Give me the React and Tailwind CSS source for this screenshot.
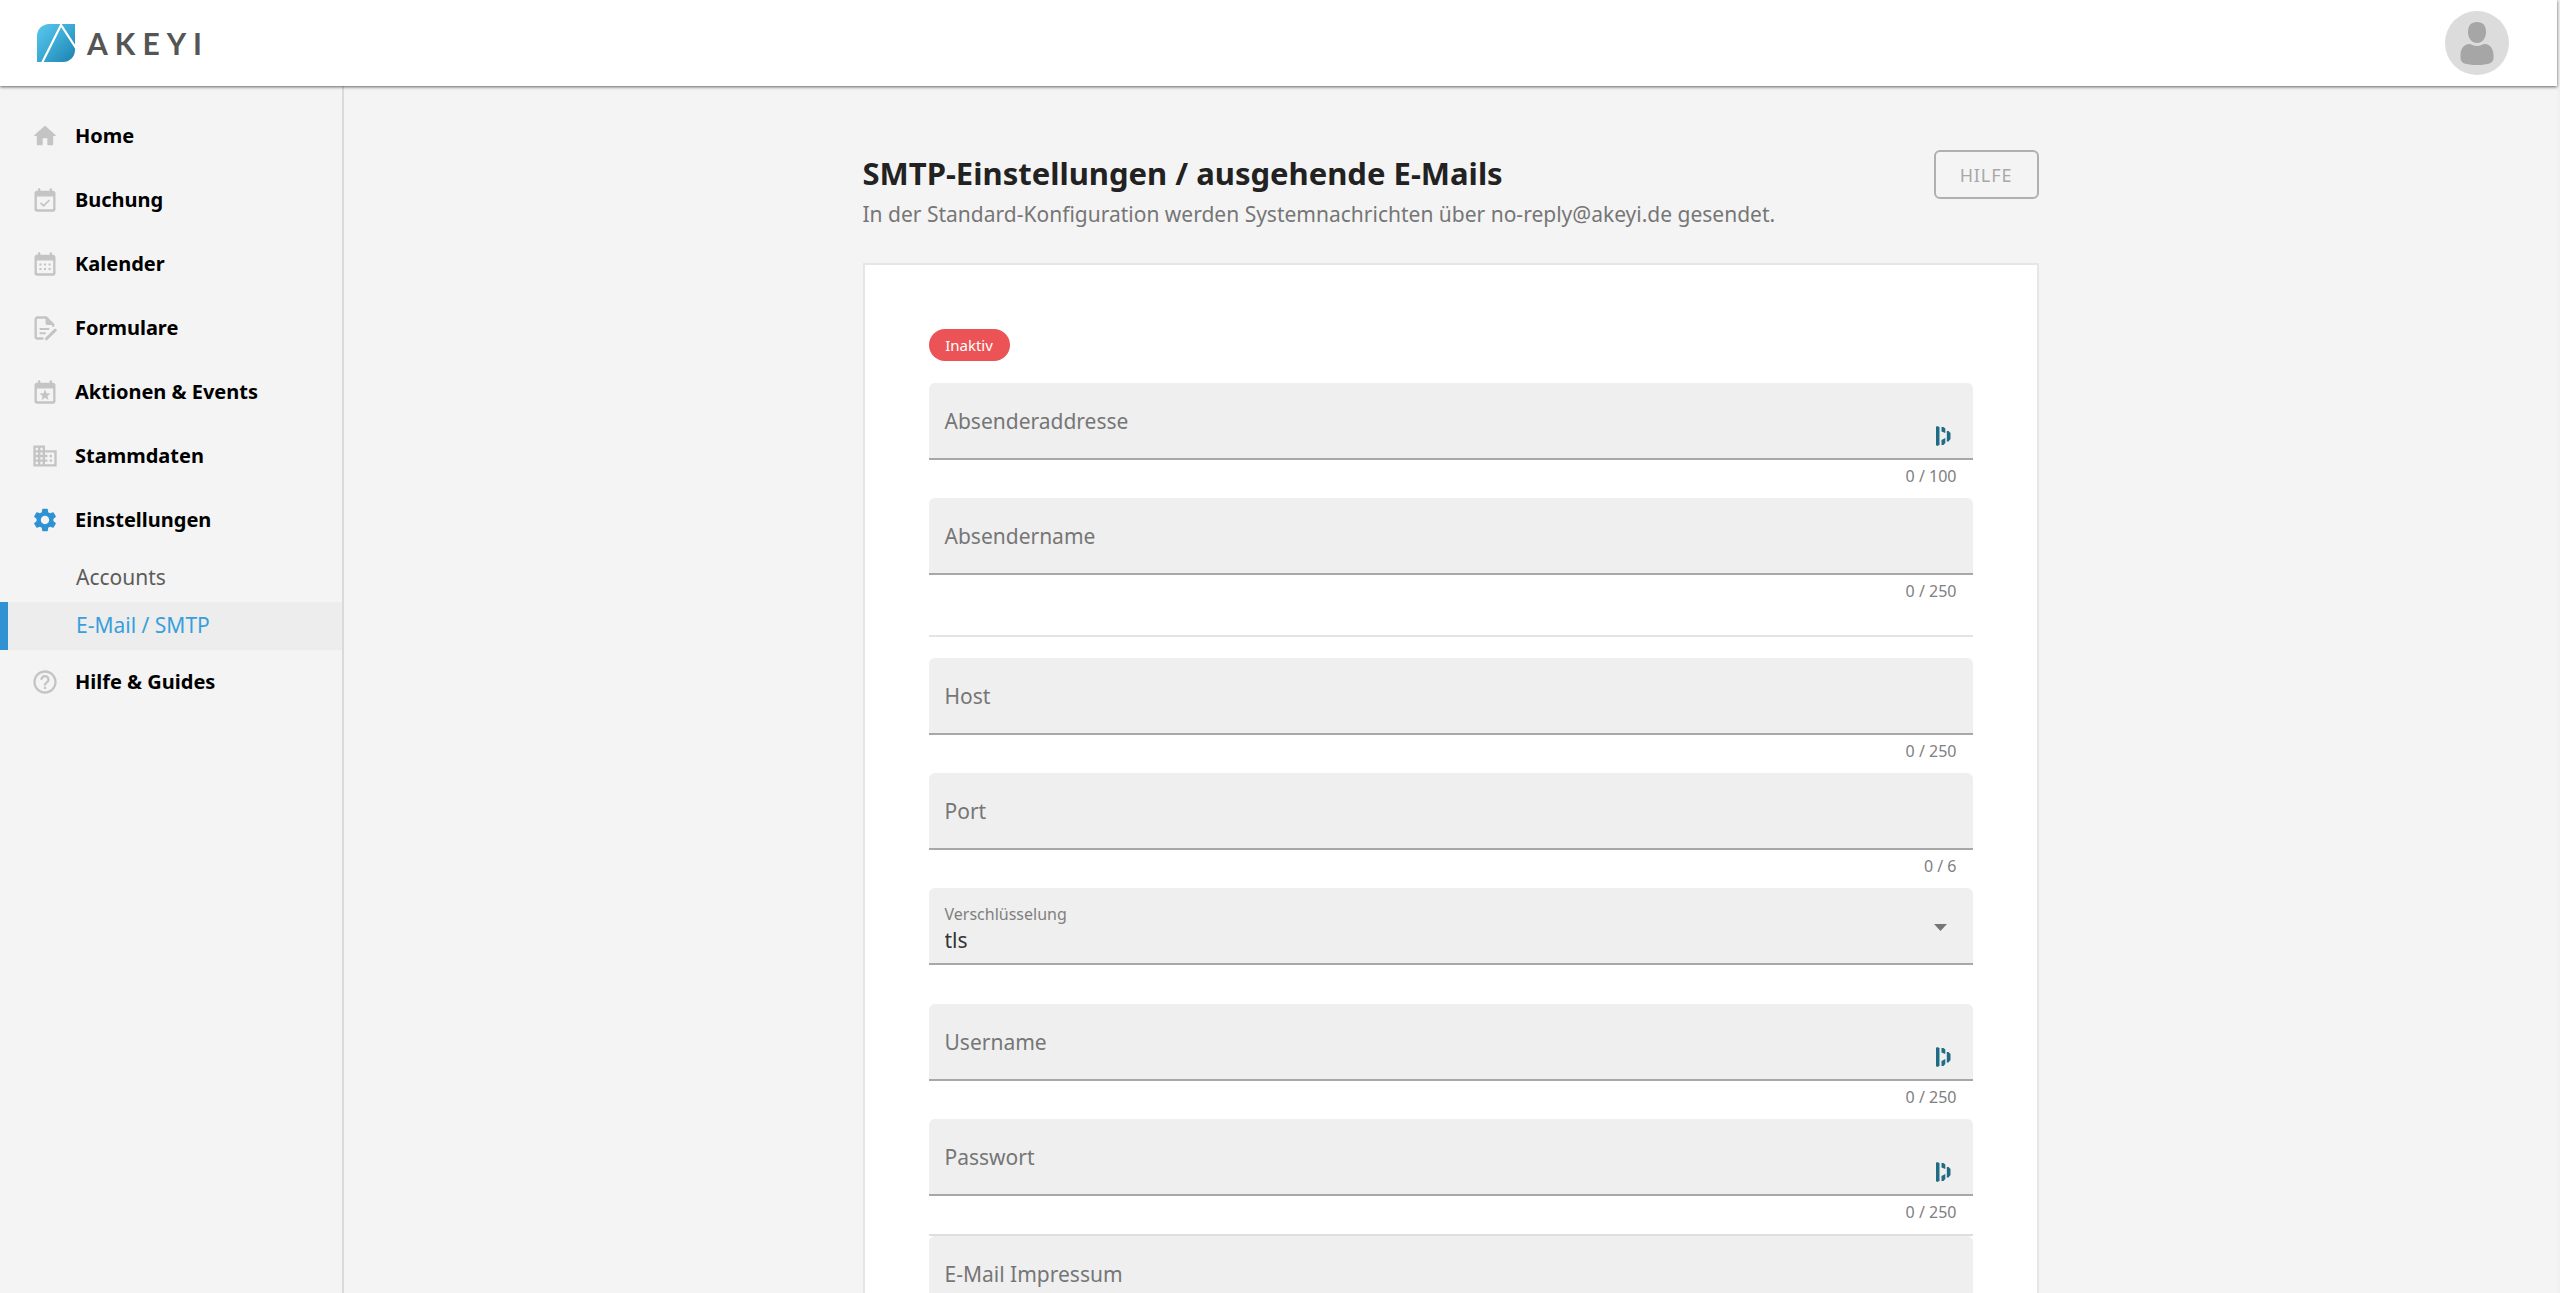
import React, { useState } from 'react';
import { MdBusiness, MdHelpOutline, MdSettings } from 'react-icons/md';

const CALENDAR =
  'M19 4h-1V3c0-.55-.45-1-1-1s-1 .45-1 1v1H8V3c0-.55-.45-1-1-1s-1 .45-1 1v1H5c-1.1 0-2 .9-2 2v14c0 1.1.9 2 2 2h14c1.1 0 2-.9 2-2V6c0-1.1-.9-2-2-2zm0 15c0 .55-.45 1-1 1H6c-.55 0-1-.45-1-1V9h14v10z';

function Icon({ children, className }) {
  return (
    <svg viewBox="0 0 24 24" fill="currentColor" className={className} aria-hidden="true">
      {children}
    </svg>
  );
}

function HomeIcon({ className }) {
  return (
    <Icon className={className}>
      <path d="M10 19v-5h4v5c0 .55.45 1 1 1h3c.55 0 1-.45 1-1v-7h1.7c.46 0 .68-.57.33-.87L12.67 3.6c-.38-.34-.96-.34-1.34 0l-8.36 7.53c-.34.3-.13.87.33.87H5v7c0 .55.45 1 1 1h3c.55 0 1-.45 1-1z" />
    </Icon>
  );
}

function BookingIcon({ className }) {
  return (
    <Icon className={className}>
      <path d={CALENDAR} />
      <path d="M8.2 14.4l2.6 2.6 5-5" fill="none" stroke="currentColor" strokeWidth="1.5" />
    </Icon>
  );
}

function CalendarIcon({ className }) {
  return (
    <Icon className={className}>
      <path d={CALENDAR} />
      <path d="M7.2 11.5h1.8v1.8H7.2zM11.1 11.5h1.8v1.8h-1.8zM15 11.5h1.8v1.8H15zM7.2 15.4h1.8v1.8H7.2zM11.1 15.4h1.8v1.8h-1.8zM15 15.4h1.8v1.8H15z" />
    </Icon>
  );
}

function FormIcon({ className }) {
  return (
    <Icon className={className}>
      <path
        d="M10 21H5.5C4.7 21 4 20.3 4 19.5V4.5C4 3.7 4.7 3 5.5 3H13l6 6v1"
        fill="none"
        stroke="currentColor"
        strokeWidth="2"
        strokeLinecap="round"
      />
      <path d="M12.5 2.5l7 7H14c-.8 0-1.500-.7-1.500-1.500z" />
      <path d="M8 12.800h7M8 16.500h4" fill="none" stroke="currentColor" strokeWidth="1.7" strokeLinecap="round" />
      <path d="M13.200 21.200l7.600-7.300" fill="none" stroke="currentColor" strokeWidth="2.6" strokeLinecap="round" />
    </Icon>
  );
}

function EventsIcon({ className }) {
  return (
    <Icon className={className}>
      <path d={CALENDAR} />
      <path d="M12 9.800l1.300 3.200 3.500.3-2.700 2.200.9 3.400-3-1.900-3 1.900.9-3.400-2.700-2.200 3.500-.3z" />
    </Icon>
  );
}

function Logo() {
  return (
    <a href="#" className="flex items-center gap-3">
      <svg viewBox="0 0 38 38" className="size-[38px]" aria-hidden="true">
        <defs>
          <linearGradient id="logoFill" x1="0" y1="0" x2="1" y2="1">
            <stop offset="0" stopColor="#5cc8ee" />
            <stop offset="0.5" stopColor="#3aa9d3" />
            <stop offset="1" stopColor="#1d80ae" />
          </linearGradient>
        </defs>
        <path d="M12 0H38V26A12 12 0 0 1 26 38H0V12A12 12 0 0 1 12 0z" fill="url(#logoFill)" />
        <path d="M5 39L24 1L39 24" fill="none" stroke="#fff" strokeWidth="2.2" />
      </svg>
      <span className="font-[Lato,sans-serif] text-[30px] leading-9 font-bold tracking-[7px] text-[#555]">AKEYI</span>
    </a>
  );
}

function Avatar() {
  return (
    <button type="button" aria-label="Profil" className="size-16 rounded-full bg-[#dcdcdc]">
      <svg viewBox="0 0 64 64" className="size-16" fill="#a6a6a6" aria-hidden="true">
        <path d="M32 11c6 0 9 3.500 9 10s-4 11-9 11-9-4.500-9-11 3-10 9-10z" />
        <path d="M24 33c2 0 4.500 2 8 2s6-2 8-2c5 0 8.500 5 8.500 11v3c0 5-5 7-16.500 7s-16.500-2-16.500-7v-3c0-6 3.500-11 8.500-11z" />
      </svg>
    </button>
  );
}

function PasswordManagerIcon() {
  return (
    <svg viewBox="0 0 15 20" className="absolute right-[22px] bottom-3 h-5 w-[15px]" fill="#1f6c84" aria-hidden="true">
      <path d="M0 1l1-1 2.500 1v18L1 20l-1-1zM5.500 1h2l1.800 1.500v4.500L5.500 5.500zM5.500 14l3.800-2v5l-1.800 2h-2zM10.800 5h1.700L14.500 7v6l-2 2.500h-1.700z" />
    </svg>
  );
}

const navItems = [
  { label: 'Home', icon: HomeIcon },
  { label: 'Buchung', icon: BookingIcon },
  { label: 'Kalender', icon: CalendarIcon },
  { label: 'Formulare', icon: FormIcon },
  { label: 'Aktionen & Events', icon: EventsIcon },
  { label: 'Stammdaten', icon: MdBusiness },
  { label: 'Einstellungen', icon: MdSettings, open: true, children: ['Accounts', 'E-Mail / SMTP'] },
  { label: 'Hilfe & Guides', icon: MdHelpOutline },
];

function Sidebar() {
  const [active, setActive] = useState('E-Mail / SMTP');

  return (
    <nav className="w-[344px] shrink-0 border-r-2 border-[#dadada] pt-[18px]">
      <ul>
        {navItems.map(({ label, icon: ItemIcon, open, children }) => (
          <li key={label}>
            <a href="#" className="flex h-16 items-center gap-4 pl-[31px] text-xl font-bold text-black">
              <ItemIcon className={open ? 'size-7 text-[#2f93d3]' : 'size-7 text-[#c4c4c4]'} />
              {label}
            </a>
            {children && (
              <ul className="pt-0.5">
                {children.map((child) => (
                  <li key={child}>
                    <a
                      href="#"
                      onClick={() => setActive(child)}
                      className={`flex h-12 items-center border-l-8 pl-[68px] text-[21px] ${
                        active === child
                          ? 'border-[#2f93d3] bg-[#ededed] text-[#36a0dc]'
                          : 'border-transparent text-[#5c5c5c]'
                      }`}
                    >
                      {child}
                    </a>
                  </li>
                ))}
              </ul>
            )}
          </li>
        ))}
      </ul>
    </nav>
  );
}

function TextField({ id, label, max, type = 'text', manager = false }) {
  const [value, setValue] = useState('');

  return (
    <div>
      <div className="relative h-[77px] rounded-t-md border-b-2 border-[#a8a8a8] bg-[#efefef]">
        <input
          id={id}
          type={type}
          value={value}
          maxLength={max}
          onChange={(e) => setValue(e.target.value)}
          className="h-full w-full px-4 pt-6 text-[21px] text-[#333] outline-none"
        />
        <label
          htmlFor={id}
          className={`pointer-events-none absolute left-4 text-[#767676] ${
            value ? 'top-3 text-base leading-6' : 'top-5 text-[21px] leading-9'
          }`}
        >
          {label}
        </label>
        {manager && <PasswordManagerIcon />}
      </div>
      {max && (
        <p className="h-[38px] px-4 pt-1 text-right text-base text-[#808080]">
          {value.length} / {max}
        </p>
      )}
    </div>
  );
}

function EncryptionSelect() {
  return (
    <div className="relative mb-[39px] flex h-[77px] flex-col rounded-t-md border-b-2 border-[#a8a8a8] bg-[#efefef] px-4 pt-3.5">
      <label htmlFor="encryption" className="text-base leading-6 text-[#808080]">
        Verschlüsselung
      </label>
      <select id="encryption" defaultValue="tls" className="h-7 appearance-none text-[21px] leading-7 text-[#333] outline-none">
        <option>tls</option>
        <option>ssl</option>
      </select>
      <svg viewBox="0 0 13 7" className="pointer-events-none absolute top-9 right-[26px] h-[7px] w-[13px]" fill="#757575" aria-hidden="true">
        <path d="M0 0h13L6.500 7z" />
      </svg>
    </div>
  );
}

export default function App() {
  return (
    <div className="flex h-screen flex-col border-r-[3px] border-[#f0f0f0] bg-[#f4f4f4] font-['Noto_Sans',sans-serif]">
      <header className="z-10 flex h-[86px] shrink-0 items-center justify-between bg-white pr-12 pl-[37px] shadow-[0_1px_3px_rgba(0,0,0,0.6)]">
        <Logo />
        <Avatar />
      </header>

      <div className="flex min-h-0 flex-1">
        <Sidebar />

        <main className="flex-1 overflow-y-auto [scrollbar-width:none]">
          <div className="mx-auto w-full max-w-[1176px] pt-16">
            <div className="flex items-start justify-between">
              <div>
                <h1 className="text-[31px] leading-[46px] font-bold text-[#222]">
                  SMTP-Einstellungen / ausgehende E-Mails
                </h1>
                <p className="text-[21px] leading-9 text-[#767676]">
                  In der Standard-Konfiguration werden Systemnachrichten über no-reply@akeyi.de gesendet.
                </p>
              </div>
              <button
                type="button"
                className="h-[49px] w-[105px] rounded-md border-2 border-[#b0b0b0] text-lg tracking-wider text-[#a8a8a8]"
              >
                HILFE
              </button>
            </div>

            <form className="mt-[31px] border-2 border-[#e6e6e6] bg-white p-16">
              <span className="mb-[22px] flex h-8 w-[81px] items-center justify-center rounded-full bg-[#eb5356] text-[15px] text-white">
                Inaktiv
              </span>

              <TextField id="sender-address" label="Absenderaddresse" max={100} type="email" manager />
              <TextField id="sender-name" label="Absendername" max={250} />
              <hr className="mt-[22px] mb-[21px] border-t-2 border-[#e4e4e4]" />
              <TextField id="host" label="Host" max={250} />
              <TextField id="port" label="Port" max={6} />
              <EncryptionSelect />
              <TextField id="username" label="Username" max={250} manager />
              <TextField id="password" label="Passwort" max={250} type="password" manager />
              <div className="border-t-2 border-[#dedede]">
                <TextField id="imprint" label="E-Mail Impressum" />
              </div>
            </form>
          </div>
        </main>
      </div>
    </div>
  );
}
